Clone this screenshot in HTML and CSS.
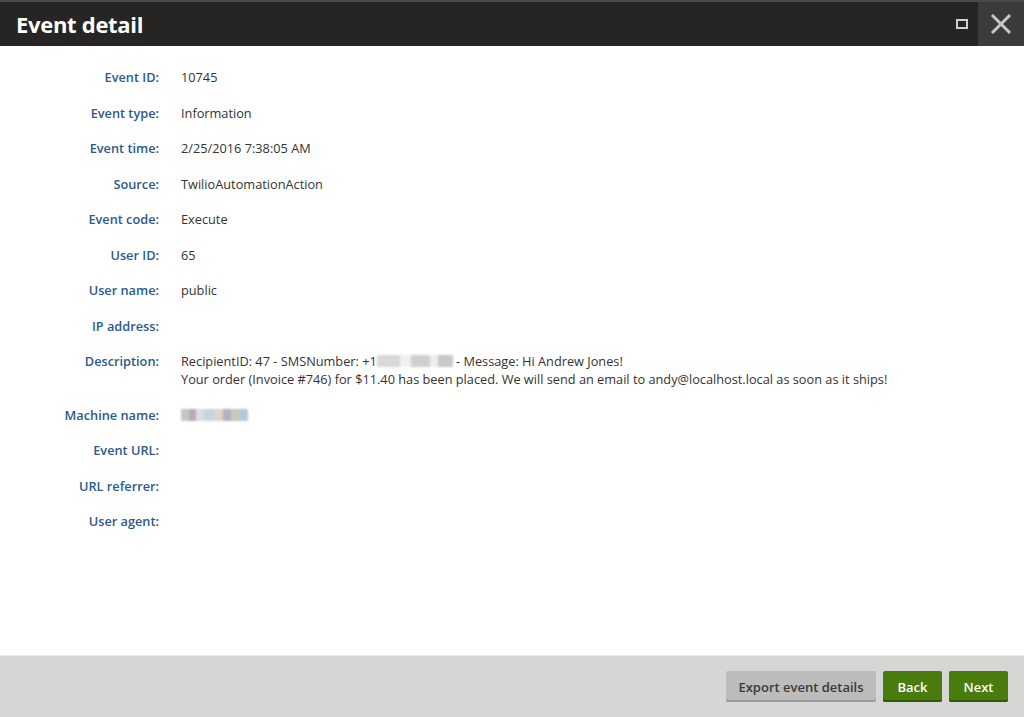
FILE: index.html
```html
<!DOCTYPE html>
<html>
<head>
<meta charset="utf-8">
<link rel="stylesheet" href="styles.css">
</head>
<body>
<div class="dialog">
  <header class="titlebar">
    <h1 class="title">Event detail</h1>
    <div class="controls">
      <button class="ctl maximize" aria-label="Maximize"><span class="max-box"></span></button>
      <button class="ctl close" aria-label="Close">
        <svg width="22" height="22" viewBox="0 0 22 22"><path d="M2 2 L20 20 M20 2 L2 20" stroke="#c8c8c8" stroke-width="3" fill="none"/></svg>
      </button>
    </div>
  </header>
  <main class="content">
    <dl class="details">
      <div class="row"><dt>Event ID:</dt><dd>10745</dd></div>
      <div class="row"><dt>Event type:</dt><dd>Information</dd></div>
      <div class="row"><dt>Event time:</dt><dd>2/25/2016 7:38:05 AM</dd></div>
      <div class="row"><dt>Source:</dt><dd>TwilioAutomationAction</dd></div>
      <div class="row"><dt>Event code:</dt><dd>Execute</dd></div>
      <div class="row"><dt>User ID:</dt><dd>65</dd></div>
      <div class="row"><dt>User name:</dt><dd>public</dd></div>
      <div class="row"><dt>IP address:</dt><dd></dd></div>
      <div class="row"><dt>Description:</dt><dd>RecipientID: 47 - SMSNumber: +1<span class="blur phone"></span> - Message: Hi Andrew Jones!<br>Your order (Invoice #746) for $11.40 has been placed. We will send an email to andy@localhost.local as soon as it ships!</dd></div>
      <div class="row"><dt>Machine name:</dt><dd><span class="blur machine"></span></dd></div>
      <div class="row"><dt>Event URL:</dt><dd></dd></div>
      <div class="row"><dt>URL referrer:</dt><dd></dd></div>
      <div class="row"><dt>User agent:</dt><dd></dd></div>
    </dl>
  </main>
  <footer class="footer">
    <button class="btn btn-default">Export event details</button>
    <button class="btn btn-primary">Back</button>
    <button class="btn btn-primary">Next</button>
  </footer>
</div>
</body>
</html>
```

FILE: styles.css
```css
html, body {
  margin: 0;
  padding: 0;
  height: 100%;
  background: #fff;
  font-family: "Open Sans", "Noto Sans", sans-serif;
}

.dialog {
  display: flex;
  flex-direction: column;
  height: 717px;
  width: 1024px;
}

.titlebar {
  height: 46px;
  background: #262524;
  border-top: 2px solid #4a4a48;
  box-sizing: border-box;
  display: flex;
  align-items: center;
  justify-content: space-between;
}

.title {
  margin: 0 0 0 16px;
  color: #fff;
  font-size: 22px;
  font-weight: 700;
  letter-spacing: -0.3px;
}

.controls {
  display: flex;
  height: 100%;
}

.ctl {
  border: 0;
  padding: 0;
  margin: 0;
  background: transparent;
  height: 100%;
  display: flex;
  align-items: center;
  justify-content: center;
}

.maximize {
  width: 32px;
}

.max-box {
  display: block;
  width: 8px;
  height: 6px;
  border: 2px solid #d0d0d0;
}

.close {
  width: 46px;
  background: #3b3b3a;
}

.content {
  flex: 1;
  padding-top: 22px;
}

.details {
  margin: 0;
  display: flex;
  flex-direction: column;
  gap: 17.5px;
}

.row {
  display: grid;
  grid-template-columns: 159px 1fr;
  column-gap: 22px;
  font-size: 12.75px;
  line-height: 18px;
  min-height: 18px;
}

dt {
  text-align: right;
  color: #2c5a8c;
  font-weight: 600;
}

dd {
  margin: 0;
  color: #333;
}

.blur {
  display: inline-block;
  height: 12px;
  vertical-align: -1px;
  filter: blur(1.2px);
}

.phone {
  width: 76px;
  background: linear-gradient(90deg, #d8d8d8 0 30%, #f0f0f0 30% 45%, #cfcfcf 45% 70%, #eee 70% 80%, #c8c8c8 80% 100%);
}

.machine {
  width: 67px;
  background: linear-gradient(90deg, #c9c6c0 0 12%, #b9a9bb 12% 22%, #ddd 22% 35%, #c8d4dd 35% 50%, #d8d6cf 50% 62%, #b9aebc 62% 75%, #c6c9bf 75% 88%, #b8c6dc 88% 100%);
}

.footer {
  height: 62px;
  background: #d6d7d4;
  border-top: 1px solid #e8e8e6;
  box-sizing: border-box;
  display: flex;
  justify-content: flex-end;
  align-items: center;
  gap: 7px;
  padding-right: 16px;
}

.btn {
  font-family: "Open Sans", "Noto Sans", sans-serif;
  font-size: 13px;
  font-weight: 600;
  height: 31px;
  border: 0;
  border-radius: 2px;
  padding: 0;
  white-space: nowrap;
  cursor: pointer;
}

.btn-default {
  background: #bdbcbc;
  color: #3a3a3a;
  box-shadow: inset 0 -2px 0 #9a9a9a;
  width: 150px;
}

.btn-primary {
  background: #497c0c;
  color: #fff;
  box-shadow: inset 0 -2px 0 #2f5a06;
  width: 59px;
}
```
